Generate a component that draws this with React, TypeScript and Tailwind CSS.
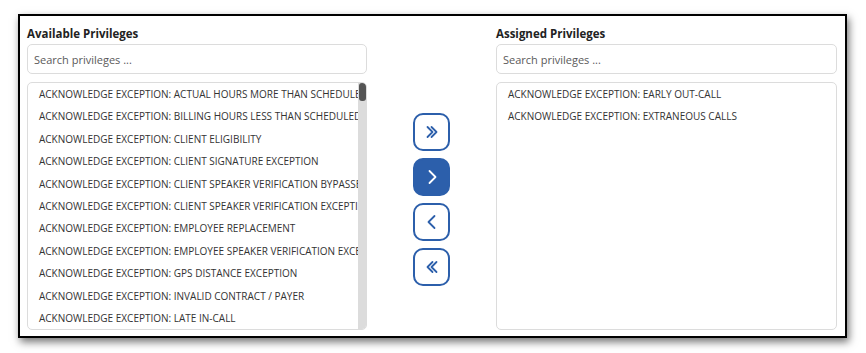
import React from 'react'

const available = [
  'ACKNOWLEDGE EXCEPTION: ACTUAL HOURS MORE THAN SCHEDULED',
  'ACKNOWLEDGE EXCEPTION: BILLING HOURS LESS THAN SCHEDULED',
  'ACKNOWLEDGE EXCEPTION: CLIENT ELIGIBILITY',
  'ACKNOWLEDGE EXCEPTION: CLIENT SIGNATURE EXCEPTION',
  'ACKNOWLEDGE EXCEPTION: CLIENT SPEAKER VERIFICATION BYPASSED',
  'ACKNOWLEDGE EXCEPTION: CLIENT SPEAKER VERIFICATION EXCEPTION',
  'ACKNOWLEDGE EXCEPTION: EMPLOYEE REPLACEMENT',
  'ACKNOWLEDGE EXCEPTION: EMPLOYEE SPEAKER VERIFICATION EXCEPTION',
  'ACKNOWLEDGE EXCEPTION: GPS DISTANCE EXCEPTION',
  'ACKNOWLEDGE EXCEPTION: INVALID CONTRACT / PAYER',
  'ACKNOWLEDGE EXCEPTION: LATE IN-CALL',
  'ACKNOWLEDGE EXCEPTION: LATE OUT-CALL',
]

const assigned = [
  'ACKNOWLEDGE EXCEPTION: EARLY OUT-CALL',
  'ACKNOWLEDGE EXCEPTION: EXTRANEOUS CALLS',
]

const Chevron = ({ dir, double }: { dir: 'left' | 'right'; double?: boolean }) => {
  const flip = dir === 'left' ? 'scale(-1,1) translate(-18,0)' : undefined
  return (
    <svg width="18" height="18" viewBox="0 0 18 18" fill="none" stroke="currentColor" strokeWidth="1.8" strokeLinecap="round" strokeLinejoin="round">
      <g transform={flip}>
        {double ? (
          <>
            <path d="M4.5 4l5 5-5 5" />
            <path d="M8.5 4l5 5-5 5" />
          </>
        ) : (
          <path d="M6.5 3l6 6-6 6" />
        )}
      </g>
    </svg>
  )
}

const Panel = ({ title, items, scroll }: { title: string; items: string[]; scroll?: boolean }) => (
  <div className="flex flex-col">
    <div className="h-[19px] text-[11.5px] font-bold leading-[19px] text-[#222]">{title}</div>
    <input
      placeholder="Search privileges ..."
      className="mt-[1px] h-[30px] w-full rounded-[5px] border border-[#dcdcdc] px-[6px] text-[11px] text-[#333] outline-none placeholder:text-[#5a5a5a]"
    />
    <div className="mt-[8px] flex h-[248px] overflow-hidden rounded-[5px] border border-[#dcdcdc]">
      <ul className="min-w-0 flex-1 overflow-hidden">
        {items.map((t) => (
          <li key={t} className="h-[22.4px] whitespace-nowrap pl-[11px] text-[10px] leading-[22.4px] text-[#333]">
            {t}
          </li>
        ))}
      </ul>
      {scroll && (
        <div className="flex w-[8px] shrink-0 justify-center bg-[#dcdcdc]">
          <div className="h-[18px] w-[7px] rounded-[3px] bg-[#555]" />
        </div>
      )}
    </div>
  </div>
)

const App = () => {
  const btn = 'flex h-[38px] w-[37px] items-center justify-center rounded-[10px] border-2 border-[#2c5fab]'
  return (
    <div className="h-[353px] w-[866px] bg-white pl-[18px] pt-[14px]" style={{ fontFamily: '"Open Sans", "Noto Sans", sans-serif' }}>
      <div className="flex h-[324px] w-[829px] border-2 border-black bg-white pl-[7px] pt-[8px] shadow-[2px_4px_8px_rgba(0,0,0,0.55)]">
        <div className="w-[340px]">
          <Panel title="Available Privileges" items={available} scroll />
        </div>
        <div className="flex w-[129px] flex-col items-center gap-[7px] pt-[89px]">
          <button className={`${btn} bg-white text-[#2c5fab]`}>
            <Chevron dir="right" double />
          </button>
          <button className={`${btn} bg-[#2c5fab] text-white`}>
            <Chevron dir="right" />
          </button>
          <button className={`${btn} bg-white text-[#2c5fab]`}>
            <Chevron dir="left" />
          </button>
          <button className={`${btn} bg-white text-[#2c5fab]`}>
            <Chevron dir="left" double />
          </button>
        </div>
        <div className="w-[341px]">
          <Panel title="Assigned Privileges" items={assigned} />
        </div>
      </div>
    </div>
  )
}

export default App
